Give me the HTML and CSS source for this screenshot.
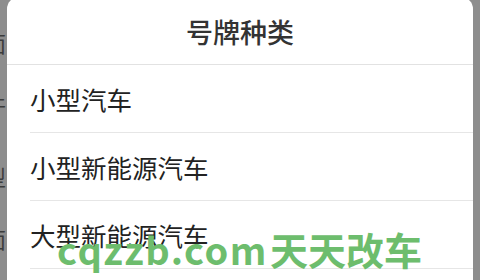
FILE: index.html
```html
<!DOCTYPE html>
<html lang="zh-CN">
<head>
<meta charset="utf-8">
<title>号牌种类</title>
<link rel="stylesheet" href="styles.css">
</head>
<body>
<div class="page">
  <div class="backdrop">
    <span class="frag f1">面</span>
    <span class="frag f2">件</span>
    <span class="frag f3">型</span>
    <span class="frag f4">面</span>
  </div>
  <div class="sheet">
    <div class="title">号牌种类</div>
    <div class="row">小型汽车</div>
    <div class="row">小型新能源汽车</div>
    <div class="row">大型新能源汽车</div>
    <div class="row"></div>
  </div>
  <div class="watermark"><span class="wm-latin">cqzzb.com</span>天天改车</div>
</div>
</body>
</html>
```
FILE: styles.css
```css
html, body {
  margin: 0;
  padding: 0;
}
body {
  width: 480px;
  height: 280px;
  overflow: hidden;
  background: #8d8d8d;
  font-family: "Noto Sans CJK SC", "Noto Sans", sans-serif;
}
.page {
  position: relative;
  height: 280px;
  overflow: hidden;
  padding: 0 7px;
}
.backdrop {
  position: absolute;
  inset: 0;
}
.frag {
  position: absolute;
  right: 474px;
  font-size: 22px;
  line-height: 22px;
  color: #3c3c3c;
}
.f1 { top: 31px; }
.f2 { top: 92px; }
.f3 { top: 165px; }
.f4 { top: 227px; }
.sheet {
  position: relative;
  background: #fff;
  border-radius: 12px 12px 0 0;
  margin-top: -3px;
}
.title {
  height: 68px;
  box-sizing: border-box;
  padding-top: 2px;
  display: flex;
  align-items: center;
  justify-content: center;
  font-size: 27px;
  font-weight: 500;
  color: #333;
  border-bottom: 1px solid #e2e2e2;
}
.row {
  height: 67px;
  margin-left: 23px;
  border-bottom: 1px solid #e6e6e6;
  display: flex;
  align-items: center;
  font-size: 25.5px;
  color: #222;
}
.watermark {
  position: absolute;
  left: 57px;
  top: 224px;
  font-size: 38px;
  line-height: 50px;
  font-weight: 700;
  color: #6dbd6d;
  white-space: nowrap;
}
.wm-latin {
  letter-spacing: 1.5px;
  margin-right: 2px;
}
```
